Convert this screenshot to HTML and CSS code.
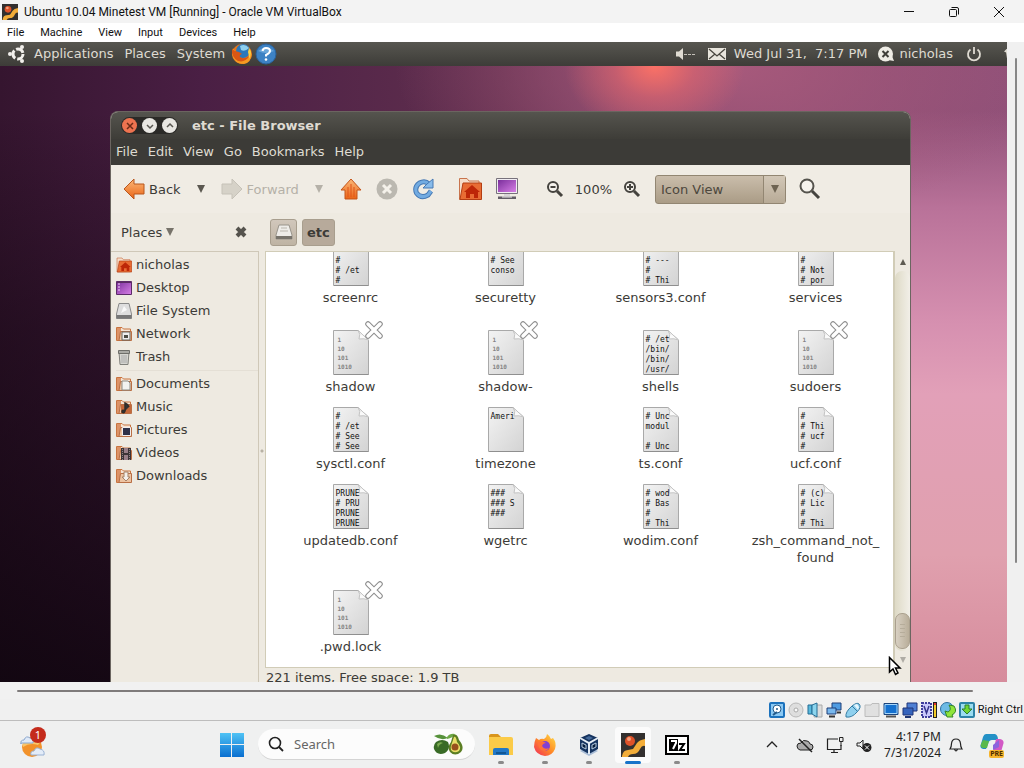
FILE: index.html
```html
<!DOCTYPE html>
<html lang="en">
<head>
<meta charset="utf-8">
<title>Ubuntu 10.04 Minetest VM [Running] - Oracle VM VirtualBox</title>
<link rel="stylesheet" href="styles.css">
</head>
<body>
<svg class="defs" aria-hidden="true">
  <defs>
    <linearGradient id="paperFill" x1="0" y1="0" x2="1" y2="1"><stop offset="0" stop-color="#f3f3f3"/><stop offset="1" stop-color="#d3d3d3"/></linearGradient>
    <linearGradient id="orange" x1="0" y1="0" x2="0" y2="1"><stop offset="0" stop-color="#fbb979"/><stop offset="1" stop-color="#ea6416"/></linearGradient>
    <linearGradient id="blue" x1="0" y1="0" x2="0" y2="1"><stop offset="0" stop-color="#4fc3f5"/><stop offset="1" stop-color="#0a6fd0"/></linearGradient>
    <linearGradient id="violet" x1="0" y1="0" x2="1" y2="1"><stop offset="0" stop-color="#7b2f9c"/><stop offset="1" stop-color="#d77fe6"/></linearGradient>
    <linearGradient id="fox" x1="1" y1="0" x2="0" y2="1"><stop offset="0" stop-color="#ffe14a"/><stop offset=".5" stop-color="#ff8a26"/><stop offset="1" stop-color="#f0265f"/></linearGradient>
    <symbol id="paper" viewBox="0 0 36 45"><path d="M.5.5H25L35.500 10V44.500H.5Z" fill="url(#paperFill)" stroke="#a9a9a9"/><path d="M25 .5Q28 4 26 9Q31 8 35.500 10Z" fill="#fafafa" stroke="#c4c4c4"/><path d="M1 44.500H35.500" stroke="#8f8f8f"/></symbol>
    <symbol id="emblem" viewBox="0 0 20 20"><path d="M4 4L16 16M16 4L4 16" stroke="#8c8c8c" stroke-width="5.500" stroke-linecap="round"/><path d="M4 4L16 16M16 4L4 16" stroke="#fff" stroke-width="3.500" stroke-linecap="round"/></symbol>
    <symbol id="folder" viewBox="0 0 16 16"><path d="M.5 14.500V1.500H6L7.500 3H14.500V14.500Z" fill="#f4e4d4" stroke="#c9743f"/><path d="M1 14V2H5V14Z" fill="#dc9367"/><path d="M4.500 5.500H15.500V14.500H3Z" fill="#ecc3a2" stroke="#b96f45"/></symbol>
    <symbol id="homefolder" viewBox="0 0 24 24"><path d="M1.500 22.500V1.500H9L11 4H21V22Z" fill="#f6ddc8" stroke="#c8744d"/><path d="M5 6H23.500V22.500H2Z" fill="#e86c34" stroke="#b43e13"/><path d="M6 15L14 8L22 15H20V21H16V17H12V21H8V15Z" fill="#bd2708"/></symbol>
    <symbol id="tri" viewBox="0 0 8 8"><path d="M0 0H8L4 8Z" fill="currentColor"/></symbol>
    <symbol id="minetest" viewBox="0 0 24 24"><path d="M0 0H24V24H0Z" fill="#33302f"/><path d="M1 23Q2 17 7 17L12 16L16 10Q18 7 24 6V13Q21 12 19 16Q17 21 12 21Q8 21 7 24H1Z" fill="#f3ad39"/><circle cx="9" cy="8" r="5" fill="#df5229"/><circle cx="8" cy="6" r="2" fill="#f5a17e"/></symbol>
  </defs>
</svg>

<header class="host-title">
  <svg class="i16" viewBox="0 0 24 24"><use href="#minetest"/></svg>
  <h1>Ubuntu 10.04 Minetest VM [Running] - Oracle VM VirtualBox</h1>
  <div class="caption">
    <button aria-label="Minimize"><svg class="i12" viewBox="0 0 12 12"><path d="M1 5.500H11" stroke="#111"/></svg></button>
    <button aria-label="Restore"><svg class="i12" viewBox="0 0 12 12" fill="none" stroke="#111"><rect x="1.500" y="3.500" width="7" height="7" rx="1"/><path d="M3.500 1.500H9Q10.500 1.500 10.500 3V8.500"/></svg></button>
    <button aria-label="Close"><svg class="i12" viewBox="0 0 12 12"><path d="M1 1L11 11M11 1L1 11" stroke="#111"/></svg></button>
  </div>
</header>
<nav class="host-menu">
  <button>File</button><button>Machine</button><button>View</button><button>Input</button><button>Devices</button><button>Help</button>
</nav>

<main class="stage">
  <section class="guest">
    <div class="panel">
      <svg class="i18" viewBox="0 0 18 18"><circle cx="10" cy="9" r="5" fill="none" stroke="#f2f0ec" stroke-width="3" stroke-dasharray="8.500 2"/><circle cx="2" cy="9" r="2" fill="#f2f0ec"/><circle cx="14" cy="2" r="2" fill="#f2f0ec"/><circle cx="14" cy="16" r="2" fill="#f2f0ec"/></svg>
      <div class="panel-menu"><button>Applications</button><button>Places</button><button>System</button></div>
      <div class="launchers">
        <button aria-label="Firefox"><svg class="i22" viewBox="0 0 22 22"><circle cx="11" cy="11" r="10" fill="#e8761a"/><path d="M1 11Q3 21 13 21Q20 20 21 10Q17 18 11 17Q6 16 5 10L2 5Z" fill="#f59a22"/><circle cx="12" cy="8" r="7" fill="#2a78bb"/><path d="M9 3Q14 0 18 5Q14 9 10 7Z" fill="#8fd0ee"/><path d="M1 6Q4 9 8 9L11 11Q8 12 9 14Q13 17 18 13Q14 20 7 18Q0 14 1 6Z" fill="#d95614"/><path d="M18 5Q22 10 18 16Q18 12 17 9Z" fill="#fbd044"/></svg></button>
        <button aria-label="Help"><svg class="i22" viewBox="0 0 22 22"><circle cx="11" cy="11" r="10" fill="#3d82c4" stroke="#2a629c"/><path d="M3 8Q11 1 19 8Q11 12 3 8Z" fill="#6aa6da"/><path d="M7.500 8Q8 5 11 5Q15 5 15 8Q15 10 11 12V13.500" fill="none" stroke="#fff" stroke-width="2"/><circle cx="11" cy="16.500" r="1.300" fill="#fff"/></svg></button>
      </div>
      <div class="panel-right">
        <svg class="i22" viewBox="0 0 22 22"><path d="M2 8.500H5L9 5V17L5 13.500H2Z" fill="#dfdbd2"/><path d="M10 11.500H21" stroke="#c4c0b8" stroke-dasharray="3 1"/></svg>
        <svg class="i18 mail" viewBox="0 0 18 18"><path d="M0 3H18V15H0Z" fill="#e8e5dd"/><path d="M1 4L9 11L17 4M1 14L7 9M17 14L11 9" fill="none" stroke="#48463f" stroke-width="1.300"/></svg>
        <span class="clock">Wed Jul 31,&nbsp; 7:17 PM</span>
        <span class="user"><svg class="i18" viewBox="0 0 18 18"><circle cx="8.500" cy="9" r="7.500" fill="#eeece5"/><path d="M11 15L17 16L15 11Z" fill="#eeece5"/><path d="M5.500 6L11.500 12M11.500 6L5.500 12" stroke="#3f3e39" stroke-width="2"/></svg>nicholas</span>
        <svg class="i18" viewBox="0 0 18 18"><path d="M5.500 4.500A6 6 0 1 0 12.500 4.500M9 2V9" fill="none" stroke="#dfdbd2" stroke-width="1.800"/></svg>
        <span class="edge"></span>
      </div>
    </div>

    <div class="window">
      <div class="win-title">
        <div class="controls">
          <button class="close" aria-label="Close"><svg class="i8" viewBox="0 0 8 8"><path d="M1 1L7 7M7 1L1 7" stroke="#6b2b17" stroke-width="1.500"/></svg></button>
          <button aria-label="Minimize"><svg class="i8" viewBox="0 0 8 8"><path d="M1 3L4 6L7 3" fill="none" stroke="#595751" stroke-width="1.500"/></svg></button>
          <button aria-label="Maximize"><svg class="i8" viewBox="0 0 8 8"><path d="M1 5L4 2L7 5" fill="none" stroke="#595751" stroke-width="1.500"/></svg></button>
        </div>
        <h2>etc - File Browser</h2>
      </div>
      <nav class="win-menu"><button>File</button><button>Edit</button><button>View</button><button>Go</button><button>Bookmarks</button><button>Help</button></nav>

      <div class="toolbar">
        <div class="nav">
          <button class="tool"><svg class="i22" viewBox="0 0 22 22"><path d="M1 11L11 1V6H21V16H11V21Z" fill="url(#orange)" stroke="#b8561d"/></svg>Back</button>
          <button aria-label="Back history"><svg class="i8"><use href="#tri"/></svg></button>
          <button class="tool off" disabled><svg class="i22" viewBox="0 0 22 22"><path d="M21 11L11 1V6H1V16H11V21Z" fill="#d6d2c8" stroke="#c6c2b8"/></svg>Forward</button>
          <button class="off" disabled aria-label="Forward history"><svg class="i8"><use href="#tri"/></svg></button>
        </div>
        <div class="acts">
          <button aria-label="Up"><svg class="i22" viewBox="0 0 22 22"><path d="M11 1L21 12H17V21H5V12H1Z" fill="url(#orange)" stroke="#c4551a"/><path d="M11 6V19M8 9V19M14 9V19" stroke="#e0551a"/></svg></button>
          <button aria-label="Stop" disabled><svg class="i22" viewBox="0 0 22 22"><circle cx="11" cy="11" r="10.500" fill="#bbb8b0"/><path d="M7 7L15 15M15 7L7 15" stroke="#f4f1ea" stroke-width="3"/></svg></button>
          <button aria-label="Reload"><svg class="i22" viewBox="0 0 22 22"><path d="M17 6Q13 2 7.500 5Q2 9 4.500 15Q9 21 16 17L19 13" fill="none" stroke="#4679b4" stroke-width="5"/><path d="M17 6Q13 2 7.500 5Q2 9 4.500 15Q9 21 16 17L19 13" fill="none" stroke="#72abe1" stroke-width="3"/><path d="M21 1V10H11L15 6Z" fill="#88bbea" stroke="#4679b4"/></svg></button>
        </div>
        <div class="acts">
          <button aria-label="Home"><svg class="i24"><use href="#homefolder"/></svg></button>
          <button aria-label="Computer"><svg class="i22" viewBox="0 0 22 22"><path d="M.5.5H21.500V15.500H.5Z" fill="#f0ecf1" stroke="#77717b"/><path d="M2 2H20V14H2Z" fill="url(#violet)"/><path d="M8 16H14V18H8Z" fill="#d8d4d8"/><path d="M2 18.500H20V21H2Z" fill="#625d66"/><path d="M6 19H16" stroke="#eee"/></svg></button>
        </div>
        <div class="zoom">
          <button aria-label="Zoom out"><svg class="i18" viewBox="0 0 18 18"><circle cx="7" cy="7" r="5" fill="#f6f3ed" stroke="#45433e" stroke-width="2"/><path d="M11 11L16 16" stroke="#45433e" stroke-width="3"/><path d="M4.500 7H9.500" stroke="#45433e" stroke-width="2"/></svg></button>
          <button>100%</button>
          <button aria-label="Zoom in"><svg class="i18" viewBox="0 0 18 18"><circle cx="7" cy="7" r="5" fill="#f6f3ed" stroke="#45433e" stroke-width="2"/><path d="M11 11L16 16" stroke="#45433e" stroke-width="3"/><path d="M4 7H10M7 4V10" stroke="#45433e" stroke-width="2"/></svg></button>
        </div>
        <div class="combo">
          <select aria-label="View mode"><option>Icon View</option><option>List View</option><option>Compact View</option></select>
          <span class="combo-arrow"><svg class="i8"><use href="#tri"/></svg></span>
        </div>
        <button aria-label="Search"><svg class="i22" viewBox="0 0 22 22"><circle cx="8" cy="8" r="6.500" fill="#f6f3ed" stroke="#55534d" stroke-width="2"/><path d="M13 13L20 20" stroke="#45433e" stroke-width="3"/></svg></button>
      </div>

      <div class="panes">
        <aside class="side">
          <div class="side-head">
            <button class="places">Places <svg class="i8"><use href="#tri"/></svg></button>
            <button aria-label="Close side pane"><svg class="i12" viewBox="0 0 12 12"><path d="M2 2L10 10M10 2L2 10" stroke="#55534d" stroke-width="4"/></svg></button>
          </div>
          <ul class="list">
            <li><a href="#"><svg class="i16"><use href="#homefolder"/></svg>nicholas</a></li>
            <li><a href="#"><svg class="i16" viewBox="0 0 16 16"><path d="M.5 1.500H15.500V14.500H.5Z" fill="url(#violet)" stroke="#5c2b69"/><path d="M2 4H4M2 7H4M2 10H4" stroke="#f5d8fa"/><path d="M1 2.500H15" stroke="#5a2964"/></svg>Desktop</a></li>
            <li><a href="#"><svg class="i16" viewBox="0 0 16 16"><path d="M3 .5H13L15.500 11V15.500H.5V11Z" fill="#dedede" stroke="#8a8a8a"/><path d="M.5 12H15.500V15.500H.5Z" fill="#777"/><path d="M8 3L11 7L5 10Z" fill="#f9f9f9"/></svg>File System</a></li>
            <li><a href="#"><svg class="i16" viewBox="0 0 16 16"><use href="#folder"/><path d="M6 6H14V14H6Z" fill="#eee" stroke="#66665e"/><path d="M8 9H12V12H8Z" fill="#4b4b44"/></svg>Network</a></li>
            <li><a href="#"><svg class="i16" viewBox="0 0 16 16"><path d="M3 3H13L12 15.500H4Z" fill="#d6d6d1" stroke="#80807b"/><path d="M2.500 1.500H13.500V4.500H2.500Z" fill="#a9a9a4" stroke="#6e6e69"/><path d="M6 6V14M8 6V14M10 6V14" stroke="#aaa"/></svg>Trash</a></li>
            <li class="after-line"><a href="#"><svg class="i16" viewBox="0 0 16 16"><use href="#folder"/><path d="M6 5H12L14 7V14H6Z" fill="#f3f3f0" stroke="#8d8d86"/></svg>Documents</a></li>
            <li><a href="#"><svg class="i16" viewBox="0 0 16 16"><use href="#folder"/><path d="M5 6H15V14H5Z" fill="#c4683a"/><path d="M9 12V4Q12 5 13 8M9 12Q6 10 6 13Q8 15 9 12Z" fill="#333" stroke="#302d29" stroke-width="1.500"/></svg>Music</a></li>
            <li><a href="#"><svg class="i16" viewBox="0 0 16 16"><use href="#folder"/><path d="M6.500 5.500H14.500V13.500H6.500Z" fill="#2d3149" stroke="#f1eeee"/></svg>Pictures</a></li>
            <li><a href="#"><svg class="i16" viewBox="0 0 16 16"><use href="#folder"/><path d="M5 3H15V15H5Z" fill="#3b3437"/><path d="M8 3H12V8H8ZM8 10H12V15H8Z" fill="#987e88"/><path d="M6.500 4V15M13.500 4V15" stroke="#8c8488" stroke-dasharray="1 1"/></svg>Videos</a></li>
            <li><a href="#"><svg class="i16" viewBox="0 0 16 16"><use href="#folder"/><path d="M8 4H12V9H14L10 13L6 9H8Z" fill="#f4f0eb" stroke="#a58369"/></svg>Downloads</a></li>
          </ul>
        </aside>
        <div class="grip"></div>
        <section class="content">
          <div class="path">
            <button aria-label="File System"><svg class="i18" viewBox="0 0 18 18"><path d="M4 2H14L17 12V16H1V12Z" fill="#eeece8" stroke="#99948b"/><path d="M1 13H17V16H1Z" fill="#77736b"/><path d="M6 5H12M5 8H13" stroke="#bab6ae"/></svg></button>
            <button class="current">etc</button>
          </div>
          <div class="view">
            <div class="files">
              <div class="row">
                <figure><div class="doc"><svg><use href="#paper"/></svg><pre class="scrolled">#
# /et
#</pre></div><figcaption>screenrc</figcaption></figure>
                <figure><div class="doc"><svg><use href="#paper"/></svg><pre class="scrolled"># See
conso</pre></div><figcaption>securetty</figcaption></figure>
                <figure><div class="doc"><svg><use href="#paper"/></svg><pre class="scrolled"># ---
#
# Thi</pre></div><figcaption>sensors3.conf</figcaption></figure>
                <figure><div class="doc"><svg><use href="#paper"/></svg><pre class="scrolled">#
# Not
# por</pre></div><figcaption>services</figcaption></figure>
              </div>
              <div class="row locked">
                <figure><div class="doc"><svg><use href="#paper"/></svg><pre class="bin">1
10
101
1010</pre><svg class="emblem"><use href="#emblem"/></svg></div><figcaption>shadow</figcaption></figure>
                <figure><div class="doc"><svg><use href="#paper"/></svg><pre class="bin">1
10
101
1010</pre><svg class="emblem"><use href="#emblem"/></svg></div><figcaption>shadow-</figcaption></figure>
                <figure><div class="doc"><svg><use href="#paper"/></svg><pre># /et
/bin/
/bin/
/usr/</pre></div><figcaption>shells</figcaption></figure>
                <figure><div class="doc"><svg><use href="#paper"/></svg><pre class="bin">1
10
101
1010</pre><svg class="emblem"><use href="#emblem"/></svg></div><figcaption>sudoers</figcaption></figure>
              </div>
              <div class="row">
                <figure><div class="doc"><svg><use href="#paper"/></svg><pre>#
# /et
# See
# See</pre></div><figcaption>sysctl.conf</figcaption></figure>
                <figure><div class="doc"><svg><use href="#paper"/></svg><pre>Ameri</pre></div><figcaption>timezone</figcaption></figure>
                <figure><div class="doc"><svg><use href="#paper"/></svg><pre># Unc
modul

# Unc</pre></div><figcaption>ts.conf</figcaption></figure>
                <figure><div class="doc"><svg><use href="#paper"/></svg><pre>#
# Thi
# ucf
#</pre></div><figcaption>ucf.conf</figcaption></figure>
              </div>
              <div class="row">
                <figure><div class="doc"><svg><use href="#paper"/></svg><pre>PRUNE
# PRU
PRUNE
PRUNE</pre></div><figcaption>updatedb.conf</figcaption></figure>
                <figure><div class="doc"><svg><use href="#paper"/></svg><pre>###
### S
###</pre></div><figcaption>wgetrc</figcaption></figure>
                <figure><div class="doc"><svg><use href="#paper"/></svg><pre># wod
# Bas
#
# Thi</pre></div><figcaption>wodim.conf</figcaption></figure>
                <figure><div class="doc"><svg><use href="#paper"/></svg><pre># (c)
# Lic
#
# Thi</pre></div><figcaption>zsh_command_not_<br>found</figcaption></figure>
              </div>
              <div class="row locked">
                <figure><div class="doc"><svg><use href="#paper"/></svg><pre class="bin">1
10
101
1010</pre><svg class="emblem"><use href="#emblem"/></svg></div><figcaption>.pwd.lock</figcaption></figure>
              </div>
            </div>
            <div class="gscroll">
              <svg class="i6" viewBox="0 0 8 8"><path d="M0 8H8L4 0Z" fill="#5e5b52"/></svg>
              <div class="gtrack"><div class="gthumb"></div></div>
              <svg class="i6 dim"><use href="#tri"/></svg>
              <svg class="cursor" viewBox="0 0 14 20"><path d="M1.500 1.500V16L5 13L7.500 18.500L10 17L7.500 12H12Z" fill="#fff" stroke="#000" stroke-width="1.500"/></svg>
            </div>
          </div>
          <div class="win-status">221 items, Free space: 1.9 TB</div>
        </section>
      </div>
    </div>
  </section>
  <div class="vscroll"><div class="vbar"></div></div>
</main>
<div class="hscroll"><div class="hbar"></div></div>

<footer class="host-status">
  <svg class="i16" viewBox="0 0 16 16"><rect x="1" y="1" width="14" height="14" rx="1" fill="#8bc9f4" stroke="#1c72bd" stroke-width="2"/><circle cx="8" cy="7" r="4" fill="#fff" stroke="#245b8b"/><circle cx="8" cy="7" r="1" fill="#245b8b"/><path d="M4 13L8 10" stroke="#245b8b" stroke-width="2"/></svg>
  <svg class="i16" viewBox="0 0 16 16"><circle cx="8" cy="8" r="7" fill="#dedede" stroke="#b8b8b8"/><circle cx="8" cy="8" r="2" fill="#fafafa" stroke="#aaa"/></svg>
  <svg class="i16" viewBox="0 0 16 16"><path d="M9 3H15V15H7Z" fill="#ddd" stroke="#aaa"/><path d="M1 3H5V12H1Z" fill="#58b9dd" stroke="#246c94"/><path d="M5 3L10 1V15L5 12Z" fill="#8cd5ee" stroke="#246c94"/></svg>
  <svg class="i16" viewBox="0 0 16 16"><path d="M6 1H15V8H6Z" fill="#4f9ce2" stroke="#1e3f78"/><path d="M1 6H10V12H1Z" fill="#78b8ee" stroke="#1e3f78"/><path d="M3 14.500H9M11 10.500H15" stroke="#333" stroke-width="2"/></svg>
  <svg class="i16" viewBox="0 0 16 16"><path d="M1 15Q0 10 7 4Q12 0 14 2Q17 5 12 10Q7 16 1 15Z" fill="#8fd0ee" stroke="#367ca3"/><path d="M7 4L12 9" stroke="#367ca3"/><path d="M9 3L12 2L14 5L13 8Z" fill="#e8f6fc"/></svg>
  <svg class="i16" viewBox="0 0 16 16"><path d="M1 3H7L8 1.500H15V14.500H1Z" fill="#e0e0e0" stroke="#bcbcbc"/></svg>
  <svg class="i16" viewBox="0 0 16 16"><path d="M1 1.500H15V12.500H1Z" fill="#1470cf" stroke="#1c447b"/><path d="M2 2.500H14V11.500H2Z" fill="none" stroke="#a6d6fa"/><path d="M3 14.500H13" stroke="#555" stroke-width="2"/></svg>
  <svg class="i16" viewBox="0 0 16 16"><path d="M5 1H15V9H5Z" fill="#4e7fd3" stroke="#1f3579"/><path d="M1 6H11V13H1Z" fill="#3564bd" stroke="#1f3579"/><path d="M3 15H9" stroke="#203673" stroke-width="2"/></svg>
  <svg class="i16" viewBox="0 0 16 16"><path d="M1 1H10V15H1Z" fill="#c9c8fa" stroke="#3e3c9b" stroke-width="2" stroke-dasharray="2 1"/><path d="M3 4L5.500 11L8 4" fill="none" stroke="#34328b" stroke-width="1.500"/><path d="M12 0H16V16H12Z" fill="#222"/><path d="M13 1H15V8H13Z" fill="#e8352c"/><path d="M13 3H15V15H13Z" fill="#f3cb27"/></svg>
  <svg class="i16" viewBox="0 0 16 16"><circle cx="7" cy="7" r="6.500" fill="#6dbbe5" stroke="#2c6f9f"/><path d="M7 15L5 9L8 10Q12 8 9 3L14 4Q18 10 12 13L13 15Z" fill="#8fe43b" stroke="#348528"/></svg>
  <svg class="i16" viewBox="0 0 16 16"><rect x="1" y="1" width="14" height="14" rx="1" fill="#9bdcf0" stroke="#2e83a8" stroke-width="2"/><path d="M6 3H10V7H13L8 12L3 7H6Z" fill="#6fd632" stroke="#2c7e2c"/></svg>
  <span>Right Ctrl</span>
</footer>

<nav class="taskbar">
  <button class="weather" aria-label="Weather">
    <svg class="i26" viewBox="0 0 26 26"><circle cx="12" cy="15" r="10" fill="#f2922b"/><path d="M3 9Q12 3 21 9L18 13Q10 10 3 15Z" fill="#f9c66a"/><path d="M1 12Q0 8 4 8Q6 3 10 6Q14 7 13 11H1Z" fill="#dfe9f7" stroke="#8ba8d0"/><path d="M11 23Q10 19 14 19Q16 14 20 17Q25 18 24 23Z" fill="#e3ecf8" stroke="#9ab2d4"/></svg>
    <span class="badge">1</span>
  </button>
  <div class="apps">
    <button class="app" aria-label="Start"><svg class="i24" viewBox="0 0 24 24"><path d="M0 0H11V11H0ZM12 0H24V11H12ZM0 12H11V24H0ZM12 12H24V24H12Z" fill="url(#blue)"/></svg></button>
    <label class="search"><svg class="i16" viewBox="0 0 16 16"><circle cx="7" cy="7" r="5.500" fill="none" stroke="#222" stroke-width="1.600"/><path d="M11 11L15 15" stroke="#222" stroke-width="1.800"/></svg><input type="text" placeholder="Search" aria-label="Search"><svg class="fruit" viewBox="0 0 30 22"><path d="M1 3Q8 -1 15 5Q8 8 1 3Z" fill="#57923b"/><path d="M14 4Q17 0 22 1Q20 5 14 6Z" fill="#6da847"/><path d="M3 9Q9 5 15 9Q18 16 12 20Q4 23 1 16Q0 12 3 9Z" fill="#396b27"/><path d="M4 11Q7 8 10 10Q6 11 5 15Z" fill="#7dac52"/><path d="M20 2Q24 0 26 7Q32 14 28 19Q22 24 17 19Q14 14 18 9Z" fill="#5b7e23"/><path d="M21 4Q23 3 24 9Q29 14 26 18Q21 21 18 17Q17 14 19 10Z" fill="#e9df68"/><circle cx="22" cy="14" r="3.500" fill="#98511d"/></svg></label>
    <button class="app" aria-label="File Explorer"><svg class="i24" viewBox="0 0 24 24"><path d="M0 3Q0 1 2 1H9L12 4H0Z" fill="#d9951c"/><path d="M0 4H22Q24 4 24 6V22H0Z" fill="#fbcb48"/><path d="M4 22V17Q4 15 6 15H18Q20 15 20 17V22Z" fill="#2278c6"/><path d="M7 20H17" stroke="#115795" stroke-width="2"/></svg><i></i></button>
    <button class="app" aria-label="Firefox"><svg class="i24" viewBox="0 0 24 24"><path d="M3 5L6 7Q8 5 11 6Q14 4 14 1Q17 3 18 6L20 5Q24 10 22 16Q19 23 12 23Q3 22 1 14Q1 9 3 5Z" fill="url(#fox)"/><circle cx="12" cy="13" r="5" fill="#8140d4"/><path d="M5 9Q9 7 13 10Q10 10 9 13Q11 17 16 15Q13 20 8 17Q5 14 5 9Z" fill="#ff7139"/></svg><i></i></button>
    <button class="app" aria-label="VirtualBox"><svg class="i24" viewBox="0 0 24 24"><path d="M3 18L12 13L21 18L12 23Z" fill="#a9bdd6"/><path d="M3 5L12 1L21 5V16L12 21L3 16Z" fill="#15335f"/><path d="M3 5L12 10L21 5M12 10V21" fill="none" stroke="#e5edf5" stroke-width="2"/><path d="M8 5L12 3L16 5L12 7Z" fill="#456b9b"/><path d="M5 10L9 12V16L5 14ZM15 12L19 10V14L15 16Z" fill="#071d3c" stroke="#b7ccdf"/></svg><i></i></button>
    <button class="app active" aria-label="Minetest VM"><svg class="i24"><use href="#minetest"/></svg><i></i></button>
    <button class="app" aria-label="7-Zip"><svg class="i24" viewBox="0 0 24 24"><path d="M1 3H23V21H1Z" fill="#fff" stroke="#000" stroke-width="2"/><path d="M4 6H13V18H4Z" fill="#000"/><path d="M6 8H11V10L8 16" fill="none" stroke="#fff" stroke-width="2"/><path d="M14 11H19L15 17H20" fill="none" stroke="#000" stroke-width="2"/></svg><i></i></button>
  </div>
  <div class="tray">
    <button aria-label="Hidden icons"><svg class="i12" viewBox="0 0 12 12"><path d="M1 8L6 3L11 8" fill="none" stroke="#222" stroke-width="1.300"/></svg></button>
    <svg class="i18" viewBox="0 0 18 18"><path d="M4 14Q1 13 1 10Q1 7 5 7Q7 3 11 5Q13 5 14 8Q17 8 17 11Q17 14 14 14Z" fill="#aaa" stroke="#222"/><path d="M3 3L16 16" stroke="#222" stroke-width="1.500"/></svg>
    <svg class="i18" viewBox="0 0 18 18"><path d="M12 3H1.500V13.500H15V9M5 16.500H12M8 13.500V16" fill="none" stroke="#222" stroke-width="1.200"/><path d="M13.500 1.500H17V5.500H13.500ZM15 5.500V10" fill="#eee" stroke="#222"/></svg>
    <svg class="i16" viewBox="0 0 16 16"><path d="M1 6H4L7 3V12L4 9H1Z" fill="none" stroke="#222"/><circle cx="11" cy="10.500" r="4.500" fill="#222"/><path d="M9 8.500L13 12.500M13 8.500L9 12.500" stroke="#fff"/></svg>
    <time>4:17 PM<br>7/31/2024</time>
    <svg class="i16" viewBox="0 0 16 16"><path d="M2 12Q3.500 10 3.500 6.500Q4 2 8 2Q12 2 12.500 6.500Q12.500 10 14 12ZM6.500 12Q8 16 9.500 12" fill="none" stroke="#222" stroke-width="1.200"/></svg>
    <span class="copilot"><svg class="i24" viewBox="0 0 24 24"><path d="M6 1H15Q18 2 18 7H12Q9 7 8 11L6 16H3Q-1 15 1 11L3 4Q4 1 6 1Z" fill="#2391c6"/><path d="M1 11L3 7L9 8L7 15H3Q0 14 1 11Z" fill="#59b94d"/><path d="M16 6H20Q25 7 23 12L21 19Q19 22 15 22H10Q13 20 14 15Z" fill="#d258c5"/><path d="M13 12L19 7V14L13 17Z" fill="#8b63dd"/></svg><b>PRE</b></span>
  </div>
</nav>
</body>
</html>
```
FILE: styles.css
```css
* { box-sizing: border-box; }
body {
  margin: 0;
  height: 100vh;
  display: flex;
  flex-direction: column;
  overflow: hidden;
  background: #f0f0f0;
  color: #111;
  font: 12px/16px "Noto Sans", "Open Sans", sans-serif;
}
h1, h2, ul, figure, pre { margin: 0; padding: 0; }
button {
  border: 0;
  padding: 0;
  margin: 0;
  background: none;
  font: inherit;
  color: inherit;
  display: inline-flex;
  align-items: center;
  justify-content: center;
}
svg { display: block; flex: none; }
.defs { position: absolute; width: 0; height: 0; }
.i6 { width: 6px; height: 6px; }
.i8 { width: 8px; height: 8px; }
.i12 { width: 12px; height: 12px; }
.i16 { width: 16px; height: 16px; }
.i18 { width: 18px; height: 18px; }
.i22 { width: 22px; height: 22px; }
.i24 { width: 24px; height: 24px; }
.i26 { width: 26px; height: 26px; }

/* Host window */
.host-title {
  flex: none;
  height: 23px;
  display: flex;
  align-items: center;
  gap: 6px;
  padding: 0 19px 0 2px;
  background: #f3f3f3;
}
.host-title h1 { font: 12px/16px Roboto, sans-serif; }
.caption { display: flex; gap: 33px; margin-left: auto; }
.host-menu {
  flex: none;
  height: 19px;
  display: flex;
  gap: 16px;
  padding-left: 7px;
  background: #fff;
  font: 11px/16px Roboto, sans-serif;
}
.stage { flex: 1; min-height: 0; display: flex; }
.vscroll { width: 17px; padding: 16px 7px 0 8px; }
.vbar { height: 505px; background: #878787; border-radius: 1px; }
.hscroll { flex: none; height: 17px; padding: 8px 51px 0 17px; background: #f1f1f1; }
.hbar { height: 2px; background: #7f7b7b; border-radius: 1px; }
.host-status {
  flex: none;
  height: 21px;
  display: flex;
  align-items: center;
  justify-content: flex-end;
  gap: 3px;
  padding-right: 1px;
  font: 11px/16px Roboto, sans-serif;
}

/* Guest desktop */
.guest {
  flex: 1;
  min-width: 0;
  overflow: hidden;
  font: 13px/17px "DejaVu Sans", sans-serif;
  color: #3c3b37;
  background:
    radial-gradient(ellipse 90px 70px at 65% 24px, #fb7166 0, #e2666d99 45%, transparent 100%),
    radial-gradient(ellipse 330px 160px at 72% 24px, #a85a7c 0, transparent 100%),
    linear-gradient(to bottom, #0a030a00 69px, #0a030a66 45%, #0a030acc 100%) left / 200px 100% no-repeat,
    linear-gradient(to bottom, #b56f9700 69px, #b97299 26%, #d690b0 44%, #e2a0b8 55%, #e0a0ae 80%, #d68c9c 100%) right / 200px 100% no-repeat,
    linear-gradient(to right, #35152f 0, #4a1f44 20%, #62304f 50%, #874a70 78%, #8f5078 100%);
}
.panel {
  height: 24px;
  display: flex;
  align-items: center;
  padding: 0 0 1px 8px;
  background: linear-gradient(#575650, #3d3c38);
  color: #dfdbd2;
}
.panel-menu { display: flex; gap: 11px; margin-left: 8px; }
.launchers { display: flex; gap: 2px; margin-left: 6px; }
.panel-right { display: flex; align-items: center; margin-left: auto; }
.mail { margin: 0 8px 0 12px; }
.user { display: flex; align-items: center; gap: 4px; margin: 0 12px 0 10px; }
.edge { width: 3px; height: 10px; margin-left: 21px; background: #dfdbd2; clip-path: polygon(0 30%, 100% 0, 100% 100%, 70% 40%); }

/* File browser */
.window {
  height: 100%;
  margin: 45px 96px 0 110px;
  border: 1px solid #6b6560;
  border-bottom: 0;
  border-radius: 8px 8px 0 0;
  overflow: hidden;
  background: #eeeae1;
}
.win-title {
  height: 27px;
  display: flex;
  align-items: center;
  gap: 14px;
  padding-left: 10px;
  background: linear-gradient(#55544e, #3e3d38);
  color: #dfdbd2;
}
.win-title h2 { font-size: 13px; line-height: 17px; }
.controls {
  display: flex;
  gap: 5px;
  height: 17px;
  align-items: center;
  padding: 0 1px;
  border-radius: 9px;
  background: #2b2a27;
}
.controls button { width: 15px; height: 15px; border-radius: 50%; background: #e9e7e2; }
.controls .close { background: #ed7350; }
.win-menu {
  height: 26px;
  display: flex;
  align-items: center;
  gap: 10px;
  padding: 0 0 2px 5px;
  background: #3c3b37;
  color: #dfdbd2;
}
.toolbar {
  height: 48px;
  display: flex;
  align-items: center;
  padding-left: 12px;
  background: #f0ece4;
}
.nav { display: flex; align-items: center; gap: 16px; color: #5b5850; }
.tool { gap: 4px; color: #3c3b37; }
.off { color: #b5b1a8; }
.acts { display: flex; align-items: center; gap: 14px; margin-left: 17px; }
.acts + .acts { margin-left: 24px; }
.zoom { display: flex; align-items: center; gap: 11px; margin-left: 28px; }
.combo { position: relative; margin: 0 13px 0 14px; color: #4c473d; }
.combo select {
  appearance: none;
  width: 131px;
  height: 29px;
  padding: 0 28px 0 5px;
  border: 1px solid #928672;
  border-radius: 3px;
  background: linear-gradient(#cabdab, #aa9c86);
  color: inherit;
  font: inherit;
}
.combo-arrow {
  position: absolute;
  top: 1px;
  right: 1px;
  bottom: 1px;
  width: 22px;
  display: flex;
  align-items: center;
  justify-content: center;
  border-left: 1px solid #928672;
  background: linear-gradient(#d2c7b7, #b8ab97);
  color: #6d6352;
  pointer-events: none;
}
.panes { display: flex; }
.side { width: 148px; flex: none; display: flex; flex-direction: column; }
.side-head {
  height: 38px;
  display: flex;
  align-items: center;
  justify-content: space-between;
  padding: 0 12px 0 10px;
}
.places { gap: 4px; }
.places svg { color: #77736a; }
.list {
  flex: 1;
  list-style: none;
  padding: 1px 0 0 5px;
  border: 1px solid #cfc8b8;
  border-left: 0;
}
.list li { height: 23px; }
.list a { display: flex; align-items: center; gap: 4px; height: 23px; color: inherit; text-decoration: none; }
.after-line { margin-top: 2px; padding-top: 1px; border-top: 1px solid #e4dfd5; box-sizing: content-box; }
.grip { width: 6px; flex: none; margin-top: 38px; background: radial-gradient(circle at 3px 200px, #b8b2a5 1px, transparent 2px); }
.content { flex: 1; min-width: 0; }
.path { height: 38px; display: flex; align-items: center; gap: 5px; padding-left: 5px; }
.path button {
  height: 27px;
  min-width: 27px;
  padding: 0 3px;
  border: 1px solid #a89e8e;
  border-radius: 3px;
  background: linear-gradient(#d1c7bb, #bfb4a4);
}
.path .current { padding: 0 4px; background: #b7aa9b; font-weight: bold; }
.view { height: 417px; display: flex; }
.files {
  flex: 1;
  overflow: hidden;
  padding-left: 7px;
  border: 2px solid #d1ccb7;
  border-width: 1px 2px 1px 1px;
  background: #fff;
}
.row { display: grid; grid-template-columns: repeat(4, 1fr); margin-bottom: 12px; }
.row:first-child { margin-top: -11px; }
.locked { padding-top: 12px; }
.row figure { display: flex; flex-direction: column; align-items: center; gap: 3px; }
.row figcaption { text-align: center; }
.doc { position: relative; width: 36px; height: 45px; display: grid; }
.doc > * { grid-area: 1 / 1; }
.doc svg { width: 36px; height: 45px; }
.doc pre {
  z-index: 1;
  padding: 5px 0 0 3px;
  font: 8px/10px "DejaVu Sans Mono", monospace;
  color: #111;
}
.doc .scrolled { padding-top: 15px; }
.doc .bin { padding: 5px 0 0 5px; font: bold 6px/9px "DejaVu Sans Mono", monospace; color: #858585; }
.doc .emblem { position: absolute; z-index: 2; width: 20px; height: 20px; top: -10px; right: -15px; }
.gscroll {
  position: relative;
  width: 15px;
  flex: none;
  display: flex;
  flex-direction: column;
  align-items: center;
  gap: 6px;
  padding: 8px 0 5px;
}
.gtrack {
  flex: 1;
  width: 15px;
  display: flex;
  flex-direction: column;
  justify-content: flex-end;
  border-radius: 7px;
  background: linear-gradient(to right, #dedac6, #f2efe8);
}
.gthumb {
  height: 36px;
  margin-bottom: 2px;
  border: 1px solid #aaa08e;
  border-radius: 7px;
  background: repeating-linear-gradient(#b6ad9b 0 1px, transparent 1px 4px) center / 5px 14px no-repeat, linear-gradient(to right, #d8d0c2, #b9ae9a);
}
.dim { opacity: .35; }
.cursor { position: absolute; width: 14px; height: 20px; right: 8px; bottom: -8px; }
.win-status { padding: 1px 0 0 1px; line-height: 17px; }

/* Host taskbar */
.taskbar {
  flex: none;
  height: 48px;
  display: flex;
  align-items: center;
  padding: 0 20px;
  border-top: 1px solid #bdbdbd;
  background: #eff0f0;
}
.weather { position: relative; }
.badge {
  position: absolute;
  top: -5px;
  right: 0;
  width: 16px;
  height: 16px;
  border-radius: 50%;
  background: #c42b1c;
  color: #fff;
  font-size: 11px;
}
.apps { display: flex; align-items: center; gap: 8px; margin-left: 168px; }
.app { position: relative; width: 36px; height: 36px; border-radius: 4px; }
.app i {
  position: absolute;
  bottom: -1px;
  width: 6px;
  height: 3px;
  border-radius: 2px;
  background: #8a8a8a;
}
.app.active { background: #fbfbfb; }
.app.active i { width: 16px; background: #1673c9; }
.search {
  display: flex;
  align-items: center;
  gap: 10px;
  width: 217px;
  height: 31px;
  padding: 0 12px 0 10px;
  border-radius: 16px;
  background: #fcfcfc;
  border-bottom: 1px solid #d4d4d4;
}
.search input { flex: 1; min-width: 0; border: 0; padding: 0; background: none; font: 13px/18px "Noto Sans", sans-serif; outline: 0; }
.search input::placeholder { color: #666; opacity: 1; }
.fruit { width: 30px; height: 22px; }
.tray { display: flex; align-items: center; gap: 12px; margin-left: auto; }
.tray time { margin-right: -5px; text-align: right; font-size: 12px; line-height: 16px; color: #222; }
.tray button { margin-right: 6px; }
.copilot { position: relative; margin-left: 4px; }
.copilot b {
  position: absolute;
  right: 0;
  bottom: -1px;
  padding: 0 1px;
  border-radius: 2px;
  background: #f7b52d;
  color: #4d2c00;
  font: bold 7px/8px "Noto Sans", sans-serif;
}
```
